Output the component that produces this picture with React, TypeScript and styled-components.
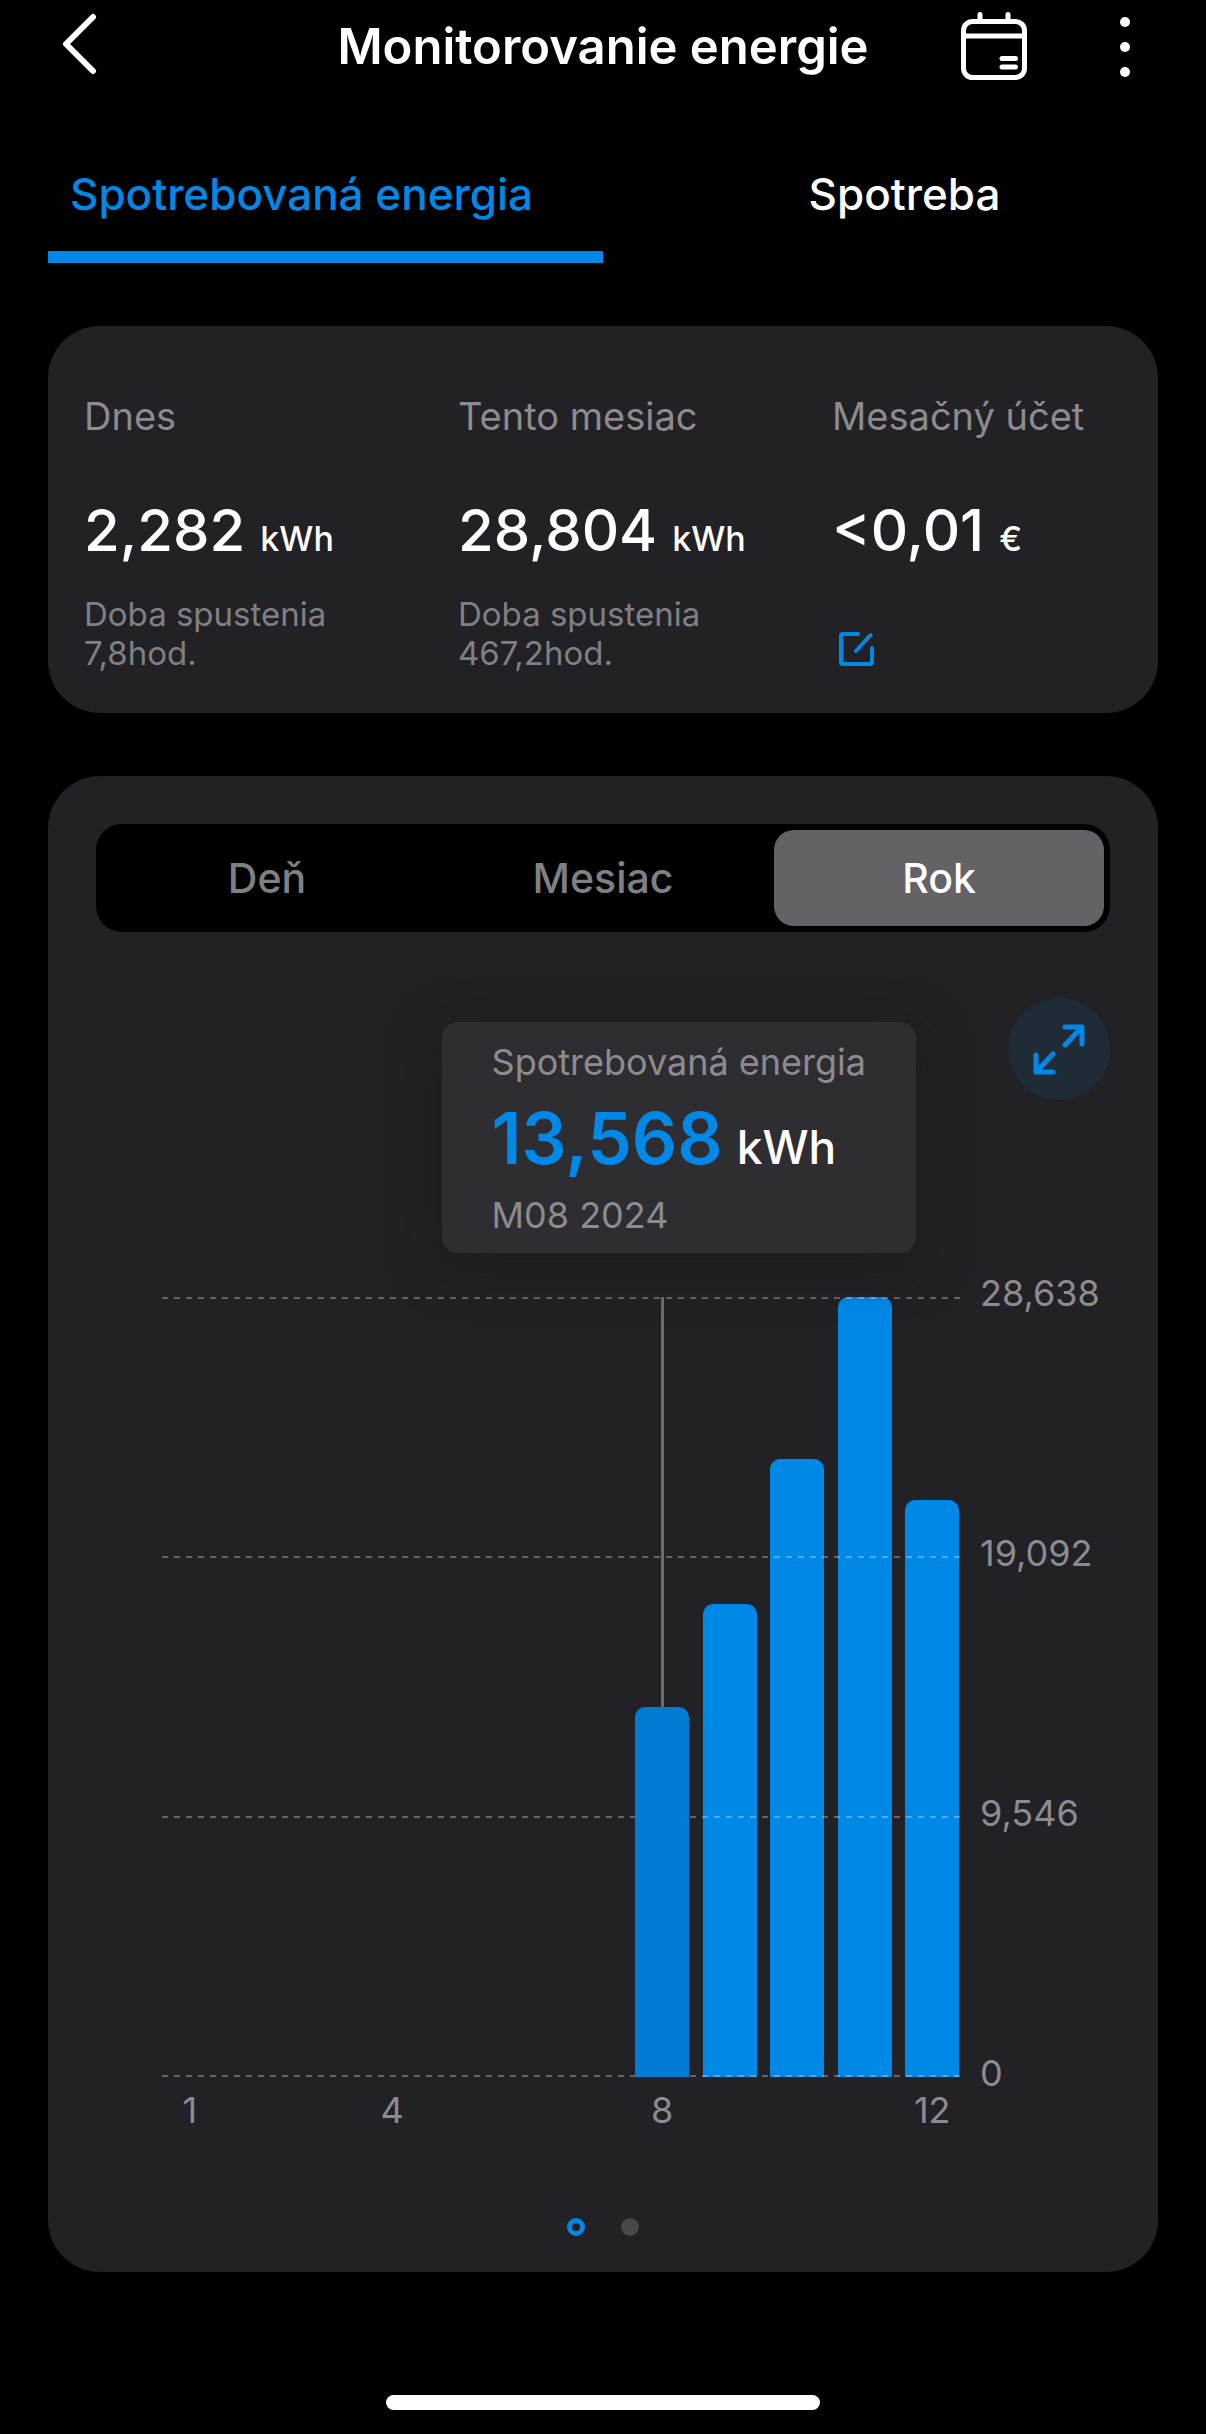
import React, { useState } from "react";
import styled, { createGlobalStyle } from "styled-components";

const color = {
  page: "#000000",
  card: "#222126",
  raised: "#2e2d32",
  selected: "#636267",
  accent: "#0088e6",
  accentPressed: "#007dd2",
  accentTint: "#1f2b36",
  text: "#ffffff",
  muted: "#8c8c8f",
  faint: "#808083",
  guide: "#6d6c70",
  dot: "#48474c",
};

const GlobalStyle = createGlobalStyle`
  * { box-sizing: border-box; }
  body {
    margin: 0;
    background: ${color.page};
    color: ${color.text};
    font-family: Inter, "Liberation Sans", sans-serif;
  }
  button {
    padding: 0;
    border: 0;
    background: none;
    color: inherit;
    font: inherit;
    cursor: pointer;
  }
  h1, h2, p, ul, ol, figure { margin: 0; padding: 0; }
  ul, ol { list-style: none; }
`;

const Screen = styled.div`
  display: flex;
  flex-direction: column;
  min-height: 100vh;
`;

const Header = styled.header`
  display: grid;
  grid-template-columns: 1fr auto 1fr;
  align-items: center;
  height: 94px;
  padding: 0 48px;
`;

const Title = styled.h1`
  font-size: 49px;
  font-weight: 600;
  line-height: 60px;
  white-space: nowrap;
`;

const Actions = styled.div`
  display: flex;
  justify-content: flex-end;
  gap: 62px;
`;

const IconButton = styled.button<{ $width?: number }>`
  display: flex;
  justify-content: center;
  align-items: center;
  width: ${(p) => p.$width ?? 72}px;
  height: 72px;
`;

const Tabs = styled.div`
  display: grid;
  grid-template-columns: 1fr 1fr;
`;

const Tab = styled.button<{ $active: boolean }>`
  display: flex;
  flex-direction: column;
  gap: 29px;
  padding-top: 72px;
  color: ${(p) => (p.$active ? color.accent : color.text)};
  font-size: 44px;
  font-weight: 500;
  line-height: 56px;
  text-align: center;

  &::after {
    content: "";
    height: 12px;
    background: ${(p) => (p.$active ? color.accent : "transparent")};
  }
  &:first-child::after { margin-left: 48px; }
  &:last-child::after { margin-right: 48px; }
`;

const TabText = styled.span`
  display: block;
`;

const Main = styled.main`
  display: flex;
  flex-direction: column;
  gap: 63px;
  padding: 63px 48px 0;
`;

const Card = styled.section`
  border-radius: 52px;
  background: ${color.card};
`;

const SummaryCard = styled(Card)`
  display: grid;
  grid-template-columns: repeat(3, 1fr);
  column-gap: 72px;
  padding: 66px 24px 40px 36px;
`;

const Stat = styled.div`
  display: flex;
  flex-direction: column;
  align-items: flex-start;
  white-space: nowrap;
`;

const StatLabel = styled.h2`
  color: ${color.muted};
  font-size: 38px;
  font-weight: 400;
  line-height: 48px;
`;

const StatValue = styled.p`
  margin: 54px 0 29px;
  font-size: 58px;
  font-weight: 500;
  line-height: 72px;
`;

const StatUnit = styled.span`
  margin-left: 15px;
  font-size: 34px;
  line-height: 1;
`;

const StatNote = styled.p`
  color: ${color.faint};
  font-size: 33px;
  line-height: 39px;
`;

const EditButton = styled.button`
  display: flex;
  margin-top: auto;
`;

const ChartCard = styled(Card)`
  display: flex;
  flex-direction: column;
  padding: 48px 48px 36px;
`;

const Segmented = styled.div`
  display: grid;
  grid-template-columns: repeat(3, 1fr);
  gap: 6px;
  padding: 6px;
  border-radius: 26px;
  background: ${color.page};
`;

const Segment = styled.button<{ $active: boolean }>`
  height: 96px;
  border-radius: 20px;
  background: ${(p) => (p.$active ? color.selected : "transparent")};
  color: ${(p) => (p.$active ? color.text : color.faint)};
  font-size: 41px;
  font-weight: 500;
`;

const Toolbar = styled.div`
  display: flex;
  justify-content: flex-end;
  margin-top: 66px;
`;

const ExpandButton = styled.button`
  display: flex;
  justify-content: center;
  align-items: center;
  width: 102px;
  height: 102px;
  border-radius: 50%;
  background: ${color.accentTint};
`;

const Chart = styled.figure`
  display: grid;
  grid-template-columns: 1fr 144px;
  margin: 197px 0 0 60px;
  color: ${color.muted};
  font-size: 36px;
  line-height: 48px;
`;

const Plot = styled.div`
  position: relative;
  display: grid;
  height: 780px;
`;

const Layer = styled.div`
  grid-area: 1 / 1;
`;

const Bars = styled(Layer)`
  display: grid;
  grid-template-columns: repeat(12, 1fr);
`;

const Slot = styled.div<{ $active: boolean }>`
  display: flex;
  flex-direction: column;
  justify-content: flex-end;
  align-items: center;
  z-index: ${(p) => (p.$active ? 2 : 0)};
`;

const Guide = styled.div`
  flex: 1;
  width: 3px;
  background: ${color.guide};
`;

const Bar = styled.div<{ $active: boolean }>`
  width: 80%;
  border-radius: 10px 10px 0 0;
  background: ${(p) => (p.$active ? color.accentPressed : color.accent)};
`;

const GridLines = styled(Layer)`
  z-index: 1;
  display: flex;
  flex-direction: column;
  justify-content: space-between;
  padding: 0 6px;
`;

const GridLine = styled.div`
  height: 2px;
  background: repeating-linear-gradient(
    90deg,
    rgba(255, 255, 255, 0.3) 0 6px,
    transparent 6px 12px
  );
`;

const ScaleY = styled.ul`
  display: flex;
  flex-direction: column;
  justify-content: space-between;
  margin: -28px 0 -20px;
  padding-left: 14px;
`;

const ScaleX = styled.ul`
  display: grid;
  grid-template-columns: repeat(12, 1fr);
  margin-top: 9px;
  text-align: center;
`;

const Tooltip = styled.figcaption`
  position: absolute;
  right: 50px;
  bottom: calc(100% + 44px);
  z-index: 3;
  padding: 16px 50px 14px;
  border-radius: 16px;
  background: ${color.raised};
  box-shadow: 0 12px 48px rgba(24, 24, 20, 0.55);
  white-space: nowrap;
`;

const TooltipValue = styled.p`
  color: ${color.accent};
  font-size: 71px;
  font-weight: 600;
  line-height: 105px;
`;

const TooltipUnit = styled.span`
  margin-left: 14px;
  color: ${color.text};
  font-size: 46px;
  font-weight: 500;
  line-height: 1;
`;

const Pager = styled.div`
  display: flex;
  justify-content: center;
  gap: 36px;
  margin-top: 84px;
`;

const PageDot = styled.button<{ $active: boolean }>`
  width: 18px;
  height: 18px;
  border: ${(p) => (p.$active ? `5px solid ${color.accent}` : "0")};
  border-radius: 50%;
  background: ${(p) => (p.$active ? "transparent" : color.dot)};
`;

const HomeIndicator = styled.div`
  width: 36%;
  height: 15px;
  margin: auto auto 24px;
  border-radius: 8px;
  background: ${color.text};
`;

const BackIcon = () => (
  <svg width="72" height="72" viewBox="0 0 72 72" fill="none" stroke="currentColor" strokeWidth="6" strokeLinecap="round" strokeLinejoin="round" aria-hidden="true">
    <path d="M45 6 18 33l27 27" />
  </svg>
);

const CalendarIcon = () => (
  <svg width="72" height="72" viewBox="0 0 72 72" fill="none" stroke="currentColor" strokeWidth="5" strokeLinecap="round" aria-hidden="true">
    <rect x="5.500" y="10.500" width="61" height="56" rx="9" />
    <path d="M6 25h60M22 3.500v7M50 3.500v7M44 47.500h13.500M44 56h13.500" />
  </svg>
);

const MoreIcon = () => (
  <svg width="12" height="72" viewBox="0 0 12 72" fill="currentColor" aria-hidden="true">
    <circle cx="6" cy="11" r="5" />
    <circle cx="6" cy="36" r="5" />
    <circle cx="6" cy="61" r="5" />
  </svg>
);

const EditIcon = () => (
  <svg width="48" height="48" viewBox="0 0 48 48" fill="none" stroke={color.accent} strokeWidth="4" strokeLinecap="round" strokeLinejoin="round" aria-hidden="true">
    <path d="M26 9H11a2 2 0 0 0-2 2v26a2 2 0 0 0 2 2h27a2 2 0 0 0 2-2V23" />
    <path d="M24 26 38.500 10" />
  </svg>
);

const ExpandIcon = () => (
  <svg width="60" height="60" viewBox="0 0 60 60" fill="none" stroke={color.accent} strokeWidth="5" strokeLinecap="round" strokeLinejoin="round" aria-hidden="true">
    <path d="M36 8h17v17M52 9 36 26" />
    <path d="M7 36v17h17M8 52l16-17" />
  </svg>
);

const PEAK = 28.638;

const months = [0, 0, 0, 0, 0, 0, 0, 13.568, 17.36, 22.7, PEAK, 21.2];
const labelledMonths = [1, 4, 8, 12];
const scale = ["28,638", "19,092", "9,546", "0"];
const periods = ["Deň", "Mesiac", "Rok"];
const tabs = ["Spotrebovaná energia", "Spotreba"];

export default function App() {
  const [tab, setTab] = useState(0);
  const [period, setPeriod] = useState(2);
  const [page, setPage] = useState(0);
  const activeMonth = 8;

  return (
    <>
      <GlobalStyle />
      <Screen>
        <Header>
          <IconButton aria-label="Späť">
            <BackIcon />
          </IconButton>
          <Title>Monitorovanie energie</Title>
          <Actions>
            <IconButton aria-label="Kalendár">
              <CalendarIcon />
            </IconButton>
            <IconButton $width={66} aria-label="Ďalšie možnosti">
              <MoreIcon />
            </IconButton>
          </Actions>
        </Header>

        <Tabs role="tablist">
          {tabs.map((name, i) => (
            <Tab key={name} role="tab" aria-selected={i === tab} $active={i === tab} onClick={() => setTab(i)}>
              <TabText>{name}</TabText>
            </Tab>
          ))}
        </Tabs>

        <Main>
          <SummaryCard>
            <Stat>
              <StatLabel>Dnes</StatLabel>
              <StatValue>
                2,282<StatUnit>kWh</StatUnit>
              </StatValue>
              <StatNote>
                Doba spustenia
                <br />
                7,8hod.
              </StatNote>
            </Stat>
            <Stat>
              <StatLabel>Tento mesiac</StatLabel>
              <StatValue>
                28,804<StatUnit>kWh</StatUnit>
              </StatValue>
              <StatNote>
                Doba spustenia
                <br />
                467,2hod.
              </StatNote>
            </Stat>
            <Stat>
              <StatLabel>Mesačný účet</StatLabel>
              <StatValue>
                &lt;0,01<StatUnit>€</StatUnit>
              </StatValue>
              <EditButton aria-label="Upraviť">
                <EditIcon />
              </EditButton>
            </Stat>
          </SummaryCard>

          <ChartCard>
            <Segmented>
              {periods.map((name, i) => (
                <Segment key={name} aria-pressed={i === period} $active={i === period} onClick={() => setPeriod(i)}>
                  {name}
                </Segment>
              ))}
            </Segmented>

            <Toolbar>
              <ExpandButton aria-label="Zväčšiť">
                <ExpandIcon />
              </ExpandButton>
            </Toolbar>

            <Chart>
              <Plot>
                <Bars>
                  {months.map((value, i) => {
                    const active = i + 1 === activeMonth;
                    return (
                      <Slot key={i} $active={active}>
                        {active && <Guide />}
                        <Bar $active={active} style={{ height: `${(value / PEAK) * 100}%` }} />
                      </Slot>
                    );
                  })}
                </Bars>
                <GridLines>
                  {scale.map((label) => (
                    <GridLine key={label} />
                  ))}
                </GridLines>
                <Tooltip>
                  <p>Spotrebovaná energia</p>
                  <TooltipValue>
                    13,568<TooltipUnit>kWh</TooltipUnit>
                  </TooltipValue>
                  <p>M08 2024</p>
                </Tooltip>
              </Plot>
              <ScaleY>
                {scale.map((label) => (
                  <li key={label}>{label}</li>
                ))}
              </ScaleY>
              <ScaleX>
                {months.map((_, i) => (
                  <li key={i}>{labelledMonths.includes(i + 1) ? i + 1 : ""}</li>
                ))}
              </ScaleX>
            </Chart>

            <Pager>
              {[0, 1].map((i) => (
                <PageDot key={i} aria-label={`Strana ${i + 1}`} $active={i === page} onClick={() => setPage(i)} />
              ))}
            </Pager>
          </ChartCard>
        </Main>

        <HomeIndicator />
      </Screen>
    </>
  );
}
